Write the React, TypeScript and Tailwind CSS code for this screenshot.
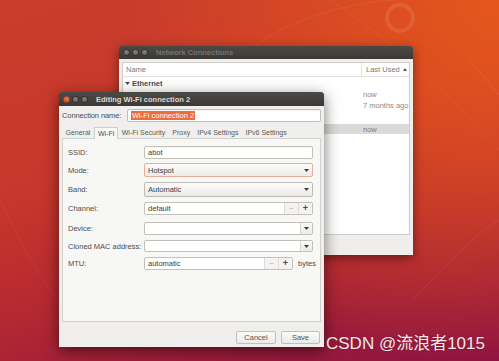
import React from 'react';

// 常量定义
const FONT = "font-['Liberation_Sans','Noto_Sans_CJK_SC',sans-serif]";
const ENTRY =
  'flex h-full items-center rounded-[2px] border border-[#c3c0ba] bg-white px-[3px] text-[7.5px] text-[#3c3c3c] shadow-[inset_0_1px_1px_rgba(0,0,0,0.05)]';
const COMBO =
  'flex h-full items-center justify-between rounded-[2px] border bg-gradient-to-b from-[#fcfcfb] to-[#ecebe9] px-[3px] text-[7.5px] text-[#3c3c3c]';

const Arrow: React.FC = () => (
  <svg width="5" height="3" viewBox="0 0 5 3" className="shrink-0">
    <polygon points="0,0 5,0 2.5,3" fill="#3c3c3c" />
  </svg>
);

const Dot: React.FC<{ active?: boolean }> = ({ active }) => (
  <div
    className={
      active
        ? 'h-[7px] w-[7px] rounded-full border border-[#b8461f] bg-gradient-to-b from-[#f27c55] to-[#df4a1c]'
        : 'h-[7px] w-[7px] rounded-full border border-[#2f2e2b] bg-gradient-to-b from-[#86857f] to-[#6a6964]'
    }
  />
);

// 组合框（按钮样式）
const Combo: React.FC<{ value: string; focus?: boolean }> = ({ value, focus }) => (
  <div className={`${COMBO} ${focus ? 'border-[#e6ad98]' : 'border-[#bdbab4]'}`}>
    <span>{value}</span>
    <span>
      <Arrow />
    </span>
  </div>
);

// 带下拉按钮的输入框
const EntryCombo: React.FC = () => (
  <div className="flex h-full rounded-[2px] border border-[#c3c0ba] bg-white">
    <div className="flex-1" />
    <div className="flex w-[12px] items-center justify-center border-l border-[#d6d4cf] bg-gradient-to-b from-[#fafaf9] to-[#eceae8]">
      <Arrow />
    </div>
  </div>
);

// 数字调节框
const Spin: React.FC<{ value: string }> = ({ value }) => (
  <div className="flex h-full rounded-[2px] border border-[#c3c0ba] bg-white">
    <div className="flex flex-1 items-center px-[3px] text-[7.5px] text-[#3c3c3c]">{value}</div>
    <div className="flex w-[14px] items-center justify-center border-l border-[#dedcd8] bg-[#f4f3f1] text-[8px] text-[#b5b3ae]">
      −
    </div>
    <div className="flex w-[14px] items-center justify-center border-l border-[#dedcd8] bg-[#f4f3f1] text-[9px] font-bold text-[#4a4a4a]">
      +
    </div>
  </div>
);

const Row: React.FC<{ label: string; className: string; children: React.ReactNode }> = ({
  label,
  className,
  children,
}) => (
  <div className={`flex items-center ${className}`}>
    <div className="w-[76px] shrink-0 text-[7.5px] text-[#4c4c4c]">{label}</div>
    <div className="h-full flex-1">{children}</div>
  </div>
);

const NetworkWindow: React.FC = () => (
  <div className="absolute left-[119px] top-[46px] w-[294px] shadow-[0_3px_10px_rgba(0,0,0,0.45)]">
    {/* 标题栏 */}
    <div className="flex h-[13px] items-center gap-[2px] rounded-t-[3px] bg-gradient-to-b from-[#4a4945] to-[#3b3a36] pl-[4px]">
      <Dot />
      <Dot />
      <Dot />
      <span className="ml-[6px] text-[7.5px] font-bold text-[#76746f]">Network Connections</span>
    </div>
    <div className="h-[196px] bg-[#efeeec] p-[3px]">
      <div className="h-[173px] border border-[#cfcdc8] bg-white text-[7.5px]">
        <div className="flex h-[14px] border-b border-[#e2e0dc] text-[#7a7a7a]">
          <div className="flex flex-1 items-center pl-[3px]">Name</div>
          <div className="flex w-[48px] items-center gap-[3px] border-l border-[#e2e0dc] pl-[4px]">
            Last Used
            <svg width="4" height="3" viewBox="0 0 4 3">
              <polygon points="0,3 4,3 2,0" fill="#555" />
            </svg>
          </div>
        </div>
        <div className="flex h-[12px] items-center pl-[2px] font-bold text-[#4a4a4a]">
          <svg width="5" height="3" viewBox="0 0 5 3" className="mr-[2px]">
            <polygon points="0,0 5,0 2.5,3" fill="#4a4a4a" />
          </svg>
          Ethernet
        </div>
        {/* 被对话框遮住的行，只保留可见的时间列 */}
        <div className="flex h-[11px] items-center text-[#8a8a8a]">
          <div className="flex-1" />
          <div className="w-[46px]">now</div>
        </div>
        <div className="flex h-[11px] items-center text-[#8a8a8a]">
          <div className="flex-1" />
          <div className="w-[46px]">7 months ago</div>
        </div>
        <div className="h-[13px]" />
        <div className="flex h-[10px] items-center bg-[#dcdad6] text-[#7c7c7c]">
          <div className="flex-1" />
          <div className="w-[46px]">now</div>
        </div>
      </div>
    </div>
  </div>
);

const EditDialog: React.FC = () => {
  const tabs = ['General', 'Wi-Fi', 'Wi-Fi Security', 'Proxy', 'IPv4 Settings', 'IPv6 Settings'];
  return (
    <div className="absolute left-[59px] top-[92px] w-[265px] shadow-[0_4px_14px_rgba(0,0,0,0.55)]">
      {/* 标题栏 */}
      <div className="flex h-[14px] items-center gap-[2px] rounded-t-[3px] bg-gradient-to-b from-[#4b4a46] to-[#3a3935] pl-[4px]">
        <Dot active />
        <Dot />
        <Dot />
        <span className="ml-[6px] text-[7.5px] font-bold text-[#dfdbd2]">Editing Wi-Fi connection 2</span>
      </div>
      <div className="h-[241px] bg-[#f0efed] px-[3px] pt-[3px]">
        {/* 连接名称 */}
        <div className="flex h-[13px] items-center">
          <div className="w-[65px] shrink-0 whitespace-nowrap text-[7.5px] tracking-[-0.1px] text-[#4c4c4c]">
            Connection name:
          </div>
          <div className="h-full flex-1">
            <div className={ENTRY}>
              <span className="bg-[#ee6a3f] px-[1px] text-white">Wi-Fi connection 2</span>
            </div>
          </div>
        </div>
        {/* 选项卡 */}
        <div className="mt-[5px] flex h-[11px] items-end text-[7px]">
          {tabs.map((t) =>
            t === 'Wi-Fi' ? (
              <div
                key={t}
                className="relative -mb-px flex h-[12px] items-center border border-b-0 border-[#cfcdc8] bg-[#f7f7f6] px-[3px] text-[#4c4c4c]"
              >
                {t}
              </div>
            ) : (
              <div key={t} className="flex h-[11px] items-center whitespace-nowrap px-[3.5px] text-[#5a5a5a]">
                {t}
              </div>
            )
          )}
        </div>
        {/* 选项卡内容 */}
        <div className="h-[184px] border border-[#d3d1cc] bg-[#f7f7f6] pl-[5px] pr-[7px] pt-[7px]">
          <Row label="SSID:" className="h-[13px]">
            <div className={ENTRY}>abot</div>
          </Row>
          <Row label="Mode:" className="mt-[4px] h-[14px]">
            <Combo value="Hotspot" focus />
          </Row>
          <Row label="Band:" className="mt-[5px] h-[15px]">
            <Combo value="Automatic" />
          </Row>
          <Row label="Channel:" className="mt-[5px] h-[13px]">
            <Spin value="default" />
          </Row>
          <Row label="Device:" className="mt-[7px] h-[13px]">
            <EntryCombo />
          </Row>
          <Row label="Cloned MAC address:" className="mt-[5px] h-[12px]">
            <EntryCombo />
          </Row>
          <Row label="MTU:" className="mt-[5px] h-[13px]">
            <div className="flex h-full items-center">
              <div className="h-full w-[149px]">
                <Spin value="automatic" />
              </div>
              <span className="ml-[5px] text-[7.5px] text-[#4c4c4c]">bytes</span>
            </div>
          </Row>
        </div>
        {/* 底部按钮 */}
        <div className="mt-[9px] flex justify-end gap-[5px] pr-[1px]">
          <div className="flex h-[13px] w-[40px] items-center justify-center rounded-[2px] border border-[#c2bfb9] bg-gradient-to-b from-[#fbfbfa] to-[#ebeae8] text-[7.5px] text-[#555]">
            Cancel
          </div>
          <div className="flex h-[13px] w-[39px] items-center justify-center rounded-[2px] border border-[#c2bfb9] bg-gradient-to-b from-[#fbfbfa] to-[#ebeae8] text-[7.5px] text-[#555]">
            Save
          </div>
        </div>
      </div>
    </div>
  );
};

export default function App() {
  return (
    <div
      className={`relative h-[361px] w-[499px] overflow-hidden bg-[radial-gradient(circle_at_100%_0%,#e5571c_0%,rgba(229,87,28,0)_60%),linear-gradient(165deg,#c93d2c_0%,#c8372b_40%,#b72a30_62%,#8c1242_100%)] leading-[9px] ${FONT}`}
    >
      {/* 壁纸线条 */}
      <svg className="absolute inset-0" width="499" height="361" viewBox="0 0 499 361">
        <circle cx="400" cy="18" r="13" fill="none" stroke="rgba(255,255,255,0.1)" strokeWidth="4" />
        <path d="M250 50 C 300 10, 380 -5, 440 0" fill="none" stroke="rgba(255,255,255,0.07)" strokeWidth="1" />
        <path d="M330 0 C 420 60, 470 120, 499 150" fill="none" stroke="rgba(255,255,255,0.06)" strokeWidth="1" />
        <path d="M413 300 C 450 260, 480 230, 499 220" fill="none" stroke="rgba(255,255,255,0.07)" strokeWidth="1" />
        <path d="M0 200 C 20 240, 40 280, 58 300" fill="none" stroke="rgba(255,255,255,0.05)" strokeWidth="1" />
        <path d="M470 60 L 499 95" fill="none" stroke="rgba(255,255,255,0.08)" strokeWidth="1" />
      </svg>
      <NetworkWindow />
      <EditDialog />
      <div className="absolute left-[326px] top-[333px] text-[17px] leading-[22px] text-white/90 [text-shadow:0_0_2px_rgba(0,0,0,0.25)]">
        CSDN @流浪者1015
      </div>
    </div>
  );
}
